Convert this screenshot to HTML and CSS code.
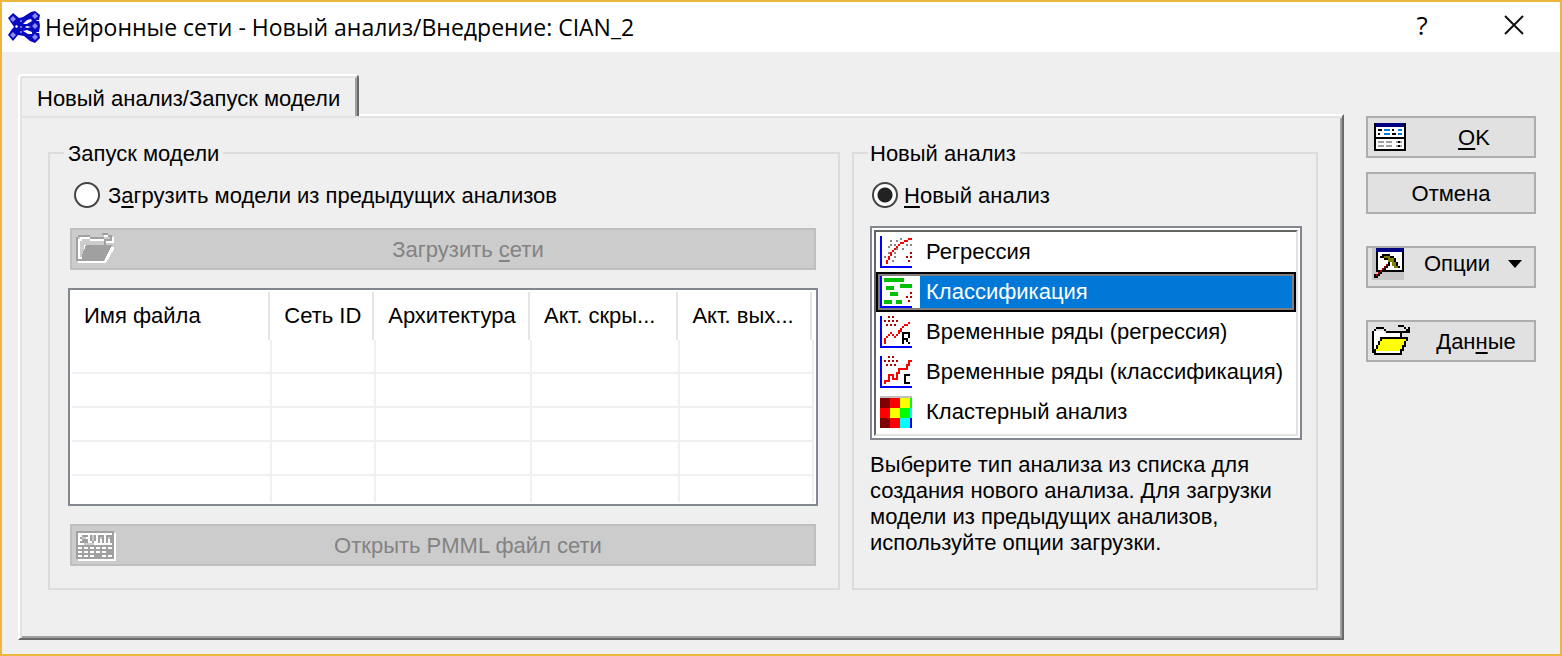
FILE: index.html
```html
<!DOCTYPE html>
<html lang="ru">
<head>
    <meta charset="UTF-8">
    <meta name="viewport" content="width=device-width, initial-scale=1.0">
    <title>Нейронные сети - Новый анализ/Внедрение: CIAN_2</title>
    <link rel="stylesheet" href="styles.css">
</head>
<body>
    <div class="window">
        <header class="titlebar">
            <svg class="app-icon" viewBox="0 0 32 32">
                <path d="M0 7L5 2L11 7L15 6L23 1L27 0L32 4L31 9L32 15L31 21L32 27L27 32L22 30L16 25L10 24L5 30L0 24L4 18L6 16L4 13z" fill="#0808c0"/>
                <g fill="#fff">
                    <path d="M15 13L19 9L23 8L24 10L19 13zM17 16L19 15L23 16L19 17zM15 20L19 19L24 21L24 23L20 23z"/>
                    <path d="M28 9h4v1h-3zM28 21h4v1h-3zM7 15l2-1 1 2-2 1z"/>
                </g>
                <g fill="#8c8cf0">
                    <path d="M5 5l3 3-3 3-3-3zM5 21l3 3-3 3-3-3zM27 2l3 3-3 3-3-3zM27 12l3 3-3 3-3-3zM27 23l3 3-3 3-3-3z"/>
                    <circle cx="13" cy="10" r="1"/>
                    <circle cx="13" cy="16" r="1"/>
                    <circle cx="13" cy="21" r="1"/>
                </g>
            </svg>
            <h1>Нейронные сети - Новый анализ/Внедрение: CIAN_2</h1>
            <button class="title-btn" type="button">?</button>
            <button class="title-btn" type="button" aria-label="Закрыть">
                <svg width="20" height="20" viewBox="0 0 20 20"><path d="M1 1L19 19M19 1L1 19" stroke="#111" stroke-width="2"/></svg>
            </button>
        </header>

        <main class="content">
            <div class="tabs">
                <button class="tab" type="button">Новый анализ/Запуск модели</button>
                <div class="panel">
                    <fieldset class="group group-models">
                        <legend>Запуск модели</legend>
                        <label class="radio"><input type="radio" name="mode"><span>З<u>а</u>грузить модели из предыдущих анализов</span></label>
                        <button class="btn btn-wide" type="button" disabled>
                            <svg width="40" height="32" viewBox="0 0 20 16" shape-rendering="crispEdges">
                                <path d="M1 15V3H2V2H7V3H14V7H19V8L15 15z" fill="#fff"/>
                                <path d="M2 4h1v8H2zM3 3h4v1H3zM7 4h7v2H4v5H3V4h4z" fill="#ccc"/>
                                <path d="M3 14V11L5 6H18L14 14z" fill="#a0a0a0"/>
                                <path d="M1 1.5h6M7 2.5h7M.5 2v12M1 13.5h3M13 .5h3M16 1.5h1M17.5 1v4M15 3.5h3M14.5 3v3" stroke="#a0a0a0"/>
                                <path d="M14 1.5h2M18.5 2v3M15 4.5h4" stroke="#fff"/>
                            </svg>
                            <span>Загрузить <u>с</u>ети</span>
                        </button>
                        <div class="table-box">
                            <table>
                                <colgroup>
                                    <col class="col-name"><col class="col-id"><col class="col-arch"><col class="col-hidden"><col class="col-out">
                                </colgroup>
                                <thead>
                                    <tr>
                                        <th><span>Имя файла</span></th>
                                        <th><span>Сеть ID</span></th>
                                        <th><span>Архитектура</span></th>
                                        <th><span>Акт. скры...</span></th>
                                        <th><span>Акт. вых...</span></th>
                                    </tr>
                                </thead>
                                <tbody>
                                    <tr><td></td><td></td><td></td><td></td><td></td></tr>
                                    <tr><td></td><td></td><td></td><td></td><td></td></tr>
                                    <tr><td></td><td></td><td></td><td></td><td></td></tr>
                                    <tr><td></td><td></td><td></td><td></td><td></td></tr>
                                    <tr><td></td><td></td><td></td><td></td><td></td></tr>
                                </tbody>
                            </table>
                        </div>
                        <button class="btn btn-wide" type="button" disabled>
                            <svg width="40" height="32" viewBox="0 0 20 16" shape-rendering="crispEdges">
                                <path d="M1 2h19v14H1z" fill="#fff"/>
                                <path d="M0 1h19v14H0z" fill="#a0a0a0"/>
                                <path d="M1 2h17v6H1z" fill="#fff"/>
                                <path d="M3 3.5h3M2.5 4v1M3 5.5h2M5.5 5v2M2 6.5h3M7.5 3v3M9.5 3v3M8 6.5h1M11.5 3v4M13.5 3v4M12 3.5h1M15.5 3v4M17.5 3v4M16 3.5h1" stroke="#a0a0a0"/>
                                <path d="M4 7h5v1H4zM3 4h2v1H3zM8 3h1v3H8zM12 4h1v1h-1zM16 4h1v1h-1z" fill="#ccc"/>
                                <path d="M1 9.5h17M1 11.5h14M1 13.5h8M13 13.5h5" stroke="#fff" stroke-dasharray="2 1"/>
                            </svg>
                            <span>Открыть PMML файл сети</span>
                        </button>
                    </fieldset>

                    <fieldset class="group group-new">
                        <legend>Новый анализ</legend>
                        <label class="radio"><input type="radio" name="mode" checked><span><u>Н</u>овый анализ</span></label>
                        <div class="list-box">
                            <ul class="list" role="listbox" aria-label="Новый анализ">
                                <li role="option">
                                    <svg viewBox="0 0 16 16" shape-rendering="crispEdges">
                                        <path d="M.5 0v16M0 15.5h16" stroke="#00f"/>
                                        <path d="M10 1.5h1M5 2.5h1M8 2.5h1M5 4.5h1M7 4.5h1M13 4.5h1M15 4.5h1M4 5.5h1M8 6.5h1M11 6.5h1M4 8.5h1M7 8.5h1M2 10.5h1M7 10.5h1M6 12.5h1" stroke="#868686"/>
                                        <path d="M3.5 12v2M4.5 10v2M5.5 8v2M6.5 7v1M7.5 6v1M8 5.5h1M9 4.5h1M10 3.5h2M12 2.5h2M14 1.5h2" stroke="#f00"/>
                                        <path d="M15 8.5h1M13 10.5h1M15 10.5h1M14 12.5h1" stroke="#b00000"/>
                                    </svg>
                                    <span>Регрессия</span>
                                </li>
                                <li class="selected" role="option" aria-selected="true">
                                    <svg viewBox="0 0 16 16" shape-rendering="crispEdges">
                                        <path d="M.5 0v16M0 15.5h16" stroke="#00f"/>
                                        <path d="M2 1h10v2H2zM10 4h6v2h-6zM3 5h4v2H3zM5 8h4v2H5zM2 12h4v2H2zM8 12h3v2H8z" fill="#00c000"/>
                                        <path d="M15 8.5h1M13 10.5h1M15 10.5h1M14 12.5h1" stroke="#b00000"/>
                                    </svg>
                                    <span>Классификация</span>
                                </li>
                                <li role="option">
                                    <svg viewBox="0 0 16 16" shape-rendering="crispEdges">
                                        <path d="M.5 0v16M0 15.5h16" stroke="#00f"/>
                                        <path d="M4 .5h1M6 .5h1M2 2.5h1M4 2.5h1M6 2.5h1M8 2.5h1M3 4.5h1M5 4.5h1M7 4.5h1" stroke="#b00000"/>
                                        <path d="M2.5 11v3M3 10.5h1M4 9.5h1M5 8.5h1M6 9.5h1M7 10.5h1M8 9.5h1M9.5 7v2M10.5 6v2M11 5.5h1M12 4.5h2M14 3.5h1" stroke="#f00"/>
                                        <path d="M11.5 8v6M12 8.5h2M14.5 8v3M12 11.5h2M13 12.5h1M14 13.5h1" stroke="#000"/>
                                    </svg>
                                    <span>Временные ряды (регрессия)</span>
                                </li>
                                <li role="option">
                                    <svg viewBox="0 0 16 16" shape-rendering="crispEdges">
                                        <path d="M.5 0v16M0 15.5h16" stroke="#00f"/>
                                        <path d="M4 .5h1M6 .5h1M2 2.5h1M4 2.5h1M6 2.5h1M8 2.5h1M3 4.5h1M5 4.5h1M7 4.5h1" stroke="#b00000"/>
                                        <path d="M2.5 12v2M2 12.5h3M4.5 9v4M4 9.5h3M6.5 9v3M6 11.5h3M8.5 8v4M8 8.5h2M9.5 6v3M9 6.5h5M13.5 4v3M14.5 2v3M14 2.5h2" stroke="#f00"/>
                                        <path d="M12.5 9v5M12 9.5h3M12 13.5h3" stroke="#000"/>
                                    </svg>
                                    <span>Временные ряды (классификация)</span>
                                </li>
                                <li role="option">
                                    <svg viewBox="0 0 16 16" shape-rendering="crispEdges">
                                        <path d="M0 0h16v1H0z" fill="#c0c0c0"/>
                                        <path d="M0 1h5v5H0zM0 11h5v5H0z" fill="#800000"/>
                                        <path d="M5 1h5v5H5zM0 6h5v5H0zM5 11h5v5H5z" fill="#f00"/>
                                        <path d="M10 1h5v5h-5zM5 6h5v5H5z" fill="#ff0"/>
                                        <path d="M15 1h1v5h-1zM10 6h5v5h-5z" fill="#0f0"/>
                                        <path d="M15 6h1v5h-1zM10 11h5v5h-5z" fill="#0ff"/>
                                        <path d="M15 11h1v5h-1z" fill="#00f"/>
                                    </svg>
                                    <span>Кластерный анализ</span>
                                </li>
                            </ul>
                        </div>
                        <p class="hint">Выберите тип анализа из списка для<br>создания нового анализа. Для загрузки<br>модели из предыдущих анализов,<br>используйте опции загрузки.</p>
                    </fieldset>
                </div>
            </div>

            <div class="actions">
                <button class="btn" type="button">
                    <svg width="36" height="32" viewBox="0 0 18 16" shape-rendering="crispEdges">
                        <path d="M1 1h16v14H1z" fill="#000"/>
                        <path d="M2 1h14v2H2z" fill="#000080"/>
                        <path d="M2 3h14v5H2zM2 9h14v5H2z" fill="#fff"/>
                        <path d="M3 4.5h2M10 4.5h1M3 6.5h1M10 6.5h2" stroke="#000"/>
                        <path d="M6 4.5h3M13 4.5h2M6 6.5h3M13 6.5h2" stroke="#0078d7"/>
                        <path d="M3 10.5h3M7 10.5h3M12 10.5h3M3 12.5h3M7 12.5h3M12 12.5h3" stroke="#a0a0a0"/>
                        <path d="M13 10.5h1M13 12.5h1" stroke="#000"/>
                    </svg>
                    <span><u>O</u>K</span>
                </button>
                <button class="btn" type="button"><span>Отмена</span></button>
                <button class="btn btn-spaced btn-menu" type="button">
                    <svg width="32" height="32" viewBox="0 0 16 16" shape-rendering="crispEdges">
                        <path d="M0 0h16v16H0z" fill="#c6c6c6"/>
                        <path d="M2 0h14v12H2z" fill="#000"/>
                        <path d="M2 0h14v2H2z" fill="#000080"/>
                        <path d="M3 2h12v9H3z" fill="#fff"/>
                        <path d="M5 3h4v1h2v1h1v2h1v2h1v1h-3V9h-1V7H9v1H8V6H6V5H4V4h1z" fill="#000"/>
                        <path d="M6 4h3v1h2v2h1v2h1v1h-2V9h-1V7H8V5H6z" fill="#808000"/>
                        <path d="M1 14.5h2M2 13.5h2M3 12.5h2M4 11.5h2M5 10.5h2M6 9.5h2M7 8.5h2M8 7.5h1M1 13.5h1" stroke="#000"/>
                        <path d="M2 13.5h1M3 12.5h1M4 11.5h1M5 10.5h1M6 9.5h1M7 8.5h1" stroke="#a00000"/>
                    </svg>
                    <span>Опции</span>
                    <svg class="arrow" width="14" height="8" viewBox="0 0 14 8"><path d="M0 0h14L7 8z"/></svg>
                </button>
                <button class="btn btn-spaced" type="button">
                    <svg width="40" height="32" viewBox="0 0 20 16" shape-rendering="crispEdges">
                        <path d="M1 3h5v1h8v3h3L14 14H1z" fill="#fff"/>
                        <path d="M4 7h13l-3 6H1z" fill="#ff0"/>
                        <path d="M.5 3v11M1 2.5h1M2 1.5h4M6 2.5h1M7 3.5h7M14.5 3v4M4 6.5h14M1 14.5h14M14.5 12v3M15.5 10v3M16.5 8v3M17.5 6v2M1.5 12v2M2.5 10v2M3.5 8v2M4.5 7v1M13 .5h3M16 1.5h1M17.5 2v2M15 3.5h4M18.5 1v3" stroke="#000"/>
                    </svg>
                    <span>Дан<u>н</u>ые</span>
                </button>
            </div>
        </main>
    </div>
</body>
</html>
```
FILE: styles.css
```css
* {
    box-sizing: border-box;
}
body {
    margin: 0;
    font-family: "Liberation Sans", Arial, sans-serif;
    font-size: 22px;
    line-height: 26px;
    color: #000;
}
button {
    font: inherit;
    color: inherit;
}
u {
    text-underline-offset: 3px;
    text-decoration-thickness: 2px;
}
.window {
    min-height: 100vh;
    border: 2px solid #edb63c;
    background: #efefef;
    display: flex;
    flex-direction: column;
}

/* title bar */
.titlebar {
    display: flex;
    align-items: center;
    height: 50px;
    padding: 0 0 0 6px;
    background: #fff;
    font-family: "Open Sans", "Noto Sans", sans-serif;
}
.app-icon {
    width: 32px;
    height: 32px;
}
.titlebar h1 {
    flex: 1;
    margin: 0 0 0 5px;
    font-size: 23px;
    font-weight: normal;
    line-height: 32px;
}
.title-btn {
    display: flex;
    justify-content: center;
    align-items: center;
    width: 92px;
    height: 46px;
    margin-bottom: 4px;
    padding: 0;
    border: none;
    background: none;
    font-size: 26px;
}

/* tab and its panel */
.content {
    flex: 1;
    display: flex;
    gap: 22px;
    padding: 22px 24px 14px 16px;
}
.tabs {
    flex: 1;
    display: flex;
    flex-direction: column;
    align-items: flex-start;
}
.tab {
    height: 42px;
    margin-bottom: -2px;
    padding: 6px 17px 0;
    border: 2px solid #fff;
    border-right-color: #696969;
    border-bottom: none;
    border-radius: 4px 4px 0 0;
    background: #efefef;
    box-shadow: inset 2px 2px #e3e3e3, inset -2px 0 #a0a0a0;
    position: relative;
}
.panel {
    flex: 1;
    width: 100%;
    display: grid;
    grid-template-columns: 792fr 466fr;
    gap: 12px;
    align-items: stretch;
    padding: 24px 24px 48px 28px;
    border: 2px solid #fff;
    border-right-color: #696969;
    border-bottom-color: #696969;
    box-shadow: inset 2px 2px #e3e3e3, inset -2px -2px #a0a0a0;
}
.group {
    min-width: 0;
    margin: 0;
    padding: 0 20px 22px 18px;
    border: 2px solid #dcdcdc;
}
.group legend {
    margin-left: -4px;
    padding: 2px 4px 0;
    line-height: 24px;
}
.group-new {
    padding: 0 14px 0 16px;
}
.group-new legend {
    margin-left: -2px;
    padding-left: 2px;
}
.radio {
    display: flex;
    align-items: center;
    gap: 8px;
    height: 26px;
    margin: 16px 0 20px 6px;
}
.radio span {
    padding-top: 2px;
}
.group-new .radio {
    gap: 6px;
    margin: 16px 0 18px 2px;
}
.radio input {
    appearance: none;
    width: 26px;
    height: 26px;
    margin: 0;
    border: 2px solid #444;
    border-radius: 50%;
    background: #fff;
}
.radio input:checked {
    background: radial-gradient(circle, #222 7px, #fff 8px);
}

/* buttons */
.btn {
    display: flex;
    align-items: center;
    height: 42px;
    padding: 0 4px;
    border: 2px solid #adadad;
    background: #e1e1e1;
}
.btn span {
    flex: 1;
    padding-top: 2px;
    text-align: center;
}
.btn svg + span {
    padding-left: 10px;
}
.btn-wide {
    width: calc(100% - 4px);
    margin: 0 2px;
}
.btn:disabled {
    border-color: #bfbfbf;
    background: #ccc;
    color: #838383;
}
.actions {
    flex: 0 0 170px;
    display: flex;
    flex-direction: column;
    gap: 14px;
    padding-top: 42px;
}
.btn-spaced {
    margin-top: 18px;
}
.btn-menu {
    align-items: flex-start;
}
.btn-menu span {
    padding: 3px 0;
}
.arrow {
    margin: 12px 8px;
}

/* table of saved networks */
.table-box {
    margin: 18px 0;
    padding: 2px;
    border: 2px solid #828790;
    background: #fff;
}
table {
    width: 100%;
    table-layout: fixed;
    border-collapse: separate;
    border-spacing: 0;
}
.col-name {
    width: 27%;
}
.col-id {
    width: 14%;
}
.col-arch {
    width: 21%;
}
.col-hidden {
    width: 20%;
}
th {
    height: 48px;
    padding: 0 2px 0 0;
    font-weight: normal;
    text-align: left;
    white-space: nowrap;
}
th span {
    display: block;
    height: 48px;
    padding-left: 12px;
    border-right: 2px solid #e5e5e5;
    line-height: 48px;
}
td {
    height: 34px;
    padding: 0;
    border-right: 2px solid #f0f0f0;
    border-bottom: 2px solid #f0f0f0;
}
tr:last-child td {
    height: 26px;
    border-bottom: none;
}

/* list of analysis types */
.list-box {
    padding: 2px;
    border: 2px solid #828790;
    background: #fff;
}
.list {
    height: 206px;
    margin: 0;
    padding: 0;
    list-style: none;
    border: 2px solid #646464;
    border-right-color: #e3e3e3;
    border-bottom-color: #e3e3e3;
}
.list li {
    display: flex;
    align-items: center;
    height: 40px;
    padding-left: 4px;
}
.list svg {
    width: 32px;
    height: 32px;
    margin-right: 8px;
}
.list span {
    flex: 1;
    padding-left: 6px;
    line-height: 32px;
}
.list .selected {
    padding-right: 4px;
    box-shadow: inset 0 0 0 2px #000, inset 0 0 0 4px #7f7f7f;
}
.list .selected span {
    background: #0078d7;
    color: #fff;
}
.hint {
    margin: 12px 0 0;
    white-space: nowrap;
}
```
